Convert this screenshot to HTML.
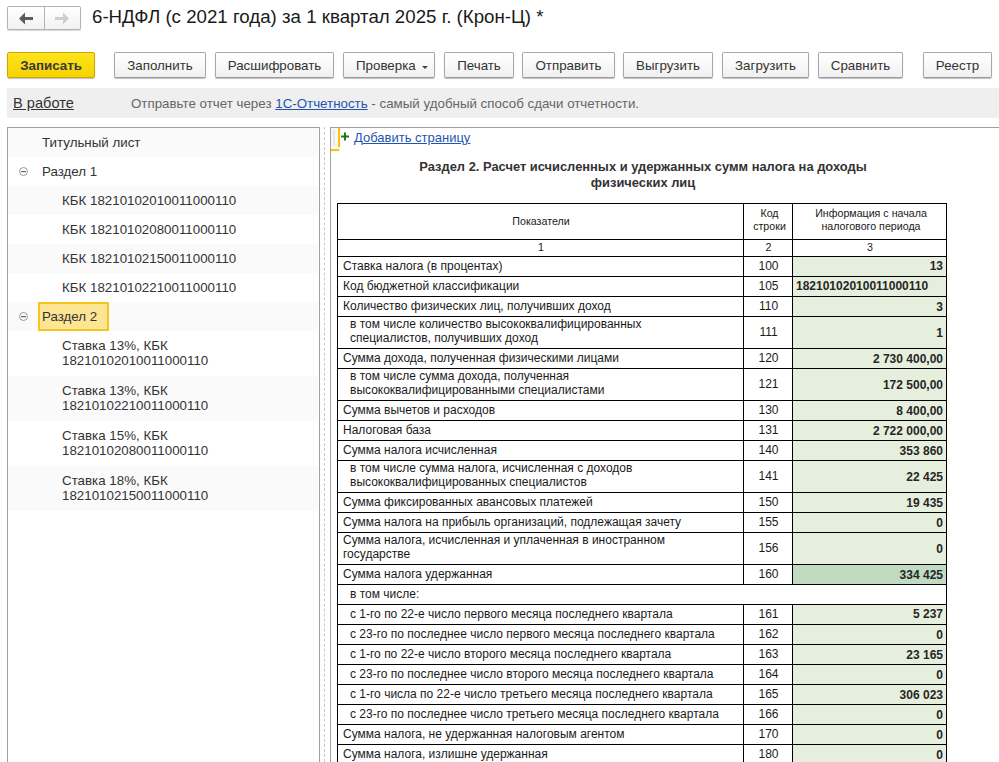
<!DOCTYPE html>
<html><head><meta charset="utf-8">
<style>
*{box-sizing:border-box;margin:0;padding:0}
html,body{width:999px;height:762px;overflow:hidden;background:#fff;font-family:"Liberation Sans",sans-serif;color:#333}
.abs{position:absolute}
.navgrp{left:7px;top:6px;width:74px;height:24px;border:1px solid #b3b3b3;border-radius:2px;background:linear-gradient(#fff,#f2f2f2);box-shadow:0 1px 1px rgba(0,0,0,.15)}
.navdiv{left:36px;top:0;width:1px;height:22px;background:#b3b3b3}
.title{left:92px;top:5px;font-size:18.7px;color:#1a1a1a;white-space:nowrap;line-height:24px}
.btn{position:absolute;top:52px;height:26px;border:1px solid #a8a8a8;border-bottom-color:#999;border-radius:2px;background:linear-gradient(#fff 0%,#fafafa 40%,#f0f0f0 100%);box-shadow:0 1px 1px rgba(0,0,0,.25);font-size:13.33px;color:#333;text-align:center;line-height:24px;padding-top:1px;white-space:nowrap}
.btn.y{background:linear-gradient(#fde31e,#f6d300);border-color:#c9a900;font-weight:bold;color:#3a3a3a}
.info{left:7px;top:88px;width:992px;height:30px;background:#efefef}
.panelL{left:7px;top:127px;width:313px;height:640px;border:1px solid #a0a0a0;border-bottom:none}
.row{position:absolute;left:0;width:310px;font-size:13.33px;color:#333;line-height:15px}
.row.g{background:#fafafa}
.splitter{left:324px;top:127px;width:1px;height:640px;border-left:1px dashed #c8c8c8}
.panelR{left:330px;top:127px;width:680px;height:640px;border:1px solid #a0a0a0;border-bottom:none;border-right:none}
table.t{position:absolute;left:337px;top:203px;border-collapse:collapse;table-layout:fixed;font-size:12px;color:#222}
table.t td{border:1px solid #000;padding:0;vertical-align:middle;line-height:14px;overflow:hidden;white-space:nowrap}

:root{--g:#e6efdd;--d:#c0dbc0}
#tbl i{position:absolute;display:block;background:#000}
#tbl b.tx{position:absolute;display:block;font-weight:normal;font-size:12px;line-height:14px;white-space:nowrap;color:#1a1a1a}
#tbl b.h{font-size:10.67px;line-height:12px}
#tbl b.v{font-weight:bold;color:#262626}
</style></head><body>
<div class="abs navgrp">
  <div class="abs navdiv"></div>
  <svg class="abs" style="left:0;top:0" width="74" height="24" viewBox="0 0 74 24">
    <path d="M11 11.5 L17 5.5 L17 10 L25 10 L25 13 L17 13 L17 17.5 Z" fill="#5c5a5e"/>
    <path d="M61 11.5 L55 5.5 L55 10 L47 10 L47 13 L55 13 L55 17.5 Z" fill="#cdcdcd"/>
  </svg>
</div>
<div class="abs title">6-НДФЛ (с 2021 года) за 1 квартал 2025 г. (Крон-Ц) *</div>

<div class="btn y" style="left:7px;width:88px">Записать</div>
<div class="btn" style="left:114px;width:92px">Заполнить</div>
<div class="btn" style="left:215px;width:119px">Расшифровать</div>
<div class="btn" style="left:343px;width:92px;text-align:left;padding-left:12px">Проверка<svg style="position:absolute;left:78px;top:13px" width="7" height="4"><path d="M0 0h6L3 3z" fill="#444"/></svg></div>
<div class="btn" style="left:444px;width:70px">Печать</div>
<div class="btn" style="left:522px;width:93px">Отправить</div>
<div class="btn" style="left:623px;width:90px">Выгрузить</div>
<div class="btn" style="left:722px;width:87px">Загрузить</div>
<div class="btn" style="left:818px;width:85px">Сравнить</div>
<div class="btn" style="left:923px;width:69px">Реестр</div>

<div class="abs info"></div>
<div class="abs" style="left:13px;top:95px;font-size:14.6px;color:#333;text-decoration:underline;line-height:17px">В работе</div>
<div class="abs" style="left:131px;top:96px;font-size:13.33px;color:#666;line-height:16px;white-space:nowrap">Отправьте отчет через <span style="color:#1f55b0;text-decoration:underline">1С-Отчетность</span> - самый удобный способ сдачи отчетности.</div>

<div class="abs panelL">
  <div class="row g" style="top:0;height:29px"><span class="abs" style="left:34px;top:7px">Титульный лист</span></div>
  <div class="row" style="top:29px;height:29px"><svg class="abs" style="left:11px;top:10px" width="10" height="10"><circle cx="4.5" cy="4.5" r="4" fill="none" stroke="#999" stroke-width="1"/><rect x="2" y="4" width="5" height="1.2" fill="#666"/></svg><span class="abs" style="left:34px;top:7px">Раздел 1</span></div>
  <div class="row g" style="top:58px;height:29px"><span class="abs" style="left:54px;top:7px">КБК 18210102010011000110</span></div>
  <div class="row" style="top:87px;height:29px"><span class="abs" style="left:54px;top:7px">КБК 18210102080011000110</span></div>
  <div class="row g" style="top:116px;height:29px"><span class="abs" style="left:54px;top:7px">КБК 18210102150011000110</span></div>
  <div class="row" style="top:145px;height:29px"><span class="abs" style="left:54px;top:7px">КБК 18210102210011000110</span></div>
  <div class="row g" style="top:174px;height:29px"><svg class="abs" style="left:11px;top:10px" width="10" height="10"><circle cx="4.5" cy="4.5" r="4" fill="none" stroke="#999" stroke-width="1"/><rect x="2" y="4" width="5" height="1.2" fill="#666"/></svg><div class="abs" style="left:30px;top:0;width:71px;height:29px;background:#fde594;border:2px solid #f6c51c"></div><span class="abs" style="left:34px;top:7px">Раздел 2</span></div>
  <div class="row" style="top:203px;height:45px"><span class="abs" style="left:54px;top:7px">Ставка 13%, КБК<br>18210102010011000110</span></div>
  <div class="row g" style="top:248px;height:45px"><span class="abs" style="left:54px;top:7px">Ставка 13%, КБК<br>18210102210011000110</span></div>
  <div class="row" style="top:293px;height:45px"><span class="abs" style="left:54px;top:7px">Ставка 15%, КБК<br>18210102080011000110</span></div>
  <div class="row g" style="top:338px;height:45px"><span class="abs" style="left:54px;top:7px">Ставка 18%, КБК<br>18210102150011000110</span></div>
</div>
<div class="abs splitter"></div>
<div class="abs panelR"></div>

<div class="abs" style="left:331px;top:128px;width:10px;height:24px;background:#f7f7f7"></div>
<div class="abs" style="left:333px;top:130px;width:2px;height:16px;background:#e8e8e8"></div>
<div class="abs" style="left:338px;top:128px;width:2px;height:19px;background:#f8c300"></div>
<div class="abs" style="left:331px;top:149px;width:8px;height:2px;background:#f8c300"></div>
<svg class="abs" style="left:340px;top:132px" width="10" height="10"><rect x="1" y="3.5" width="8" height="2" fill="#1b7a1b"/><rect x="4" y="0.5" width="2" height="8" fill="#1b7a1b"/></svg>
<div class="abs" style="left:354px;top:130px;font-size:13px;line-height:15px;color:#1f55b0;white-space:nowrap">Д<span style="text-decoration:underline">обавить страницу</span></div>
<div class="abs" style="left:343px;top:159px;width:600px;text-align:center;font-size:12.9px;font-weight:bold;line-height:16px;color:#333;white-space:nowrap">Раздел 2. Расчет исчисленных и удержанных сумм налога на доходы<br>физических лиц</div>
<!-- TABLE -->
<div id="tbl">
<i style="left:743px;top:203px;width:1px;height:37px"></i>
<i style="left:792px;top:203px;width:1px;height:37px"></i>
<b class="tx h" style="left:338px;top:215px;width:406px;text-align:center">Показатели</b>
<b class="tx h" style="left:745px;top:207px;width:49px;text-align:center;line-height:13px">Код<br>строки</b>
<b class="tx h" style="left:794px;top:207px;width:154px;text-align:center;line-height:13px">Информация с начала<br>налогового периода</b>
<i style="left:337px;top:239px;width:610px;height:1px"></i>
<i style="left:743px;top:239px;width:1px;height:18px"></i>
<i style="left:792px;top:239px;width:1px;height:18px"></i>
<b class="tx h" style="left:338px;top:241px;width:406px;text-align:center">1</b>
<b class="tx h" style="left:744px;top:241px;width:49px;text-align:center">2</b>
<b class="tx h" style="left:793px;top:241px;width:154px;text-align:center">3</b>
<i style="left:337px;top:256px;width:610px;height:1px"></i>
<i style="left:793px;top:257px;width:153px;height:19px;background:var(--g)"></i>
<i style="left:743px;top:256px;width:1px;height:21px"></i>
<i style="left:792px;top:256px;width:1px;height:21px"></i>
<b class="tx " style="left:343px;top:259px;">Ставка налога (в процентах)</b>
<b class="tx" style="left:744px;top:259px;width:49px;text-align:center">100</b>
<b class="tx v" style="left:792px;top:259px;width:151px;text-align:right">13</b>
<i style="left:337px;top:276px;width:610px;height:1px"></i>
<i style="left:793px;top:277px;width:153px;height:19px;background:var(--g)"></i>
<i style="left:743px;top:276px;width:1px;height:21px"></i>
<i style="left:792px;top:276px;width:1px;height:21px"></i>
<b class="tx " style="left:343px;top:279px;">Код бюджетной классификации</b>
<b class="tx" style="left:744px;top:279px;width:49px;text-align:center">105</b>
<b class="tx v" style="left:796px;top:279px">18210102010011000110</b>
<i style="left:337px;top:296px;width:610px;height:1px"></i>
<i style="left:793px;top:297px;width:153px;height:19px;background:var(--g)"></i>
<i style="left:743px;top:296px;width:1px;height:21px"></i>
<i style="left:792px;top:296px;width:1px;height:21px"></i>
<b class="tx " style="left:343px;top:299px;">Количество физических лиц, получивших доход</b>
<b class="tx" style="left:744px;top:299px;width:49px;text-align:center">110</b>
<b class="tx v" style="left:792px;top:300px;width:151px;text-align:right">3</b>
<i style="left:337px;top:316px;width:610px;height:1px"></i>
<i style="left:793px;top:317px;width:153px;height:31px;background:var(--g)"></i>
<i style="left:743px;top:316px;width:1px;height:33px"></i>
<i style="left:792px;top:316px;width:1px;height:33px"></i>
<b class="tx " style="left:350px;top:317px;">в том числе количество высококвалифицированных<br>специалистов, получивших доход</b>
<b class="tx" style="left:744px;top:325px;width:49px;text-align:center">111</b>
<b class="tx v" style="left:792px;top:326px;width:151px;text-align:right">1</b>
<i style="left:337px;top:348px;width:610px;height:1px"></i>
<i style="left:793px;top:349px;width:153px;height:19px;background:var(--g)"></i>
<i style="left:743px;top:348px;width:1px;height:21px"></i>
<i style="left:792px;top:348px;width:1px;height:21px"></i>
<b class="tx " style="left:343px;top:351px;">Сумма дохода, полученная физическими лицами</b>
<b class="tx" style="left:744px;top:351px;width:49px;text-align:center">120</b>
<b class="tx v" style="left:792px;top:352px;width:151px;text-align:right">2 730 400,00</b>
<i style="left:337px;top:368px;width:610px;height:1px"></i>
<i style="left:793px;top:369px;width:153px;height:31px;background:var(--g)"></i>
<i style="left:743px;top:368px;width:1px;height:33px"></i>
<i style="left:792px;top:368px;width:1px;height:33px"></i>
<b class="tx " style="left:350px;top:369px;">в том числе сумма дохода, полученная<br>высококвалифицированными специалистами</b>
<b class="tx" style="left:744px;top:377px;width:49px;text-align:center">121</b>
<b class="tx v" style="left:792px;top:378px;width:151px;text-align:right">172 500,00</b>
<i style="left:337px;top:400px;width:610px;height:1px"></i>
<i style="left:793px;top:401px;width:153px;height:19px;background:var(--g)"></i>
<i style="left:743px;top:400px;width:1px;height:21px"></i>
<i style="left:792px;top:400px;width:1px;height:21px"></i>
<b class="tx " style="left:343px;top:403px;">Сумма вычетов и расходов</b>
<b class="tx" style="left:744px;top:403px;width:49px;text-align:center">130</b>
<b class="tx v" style="left:792px;top:404px;width:151px;text-align:right">8 400,00</b>
<i style="left:337px;top:420px;width:610px;height:1px"></i>
<i style="left:793px;top:421px;width:153px;height:19px;background:var(--g)"></i>
<i style="left:743px;top:420px;width:1px;height:21px"></i>
<i style="left:792px;top:420px;width:1px;height:21px"></i>
<b class="tx " style="left:343px;top:423px;">Налоговая база</b>
<b class="tx" style="left:744px;top:423px;width:49px;text-align:center">131</b>
<b class="tx v" style="left:792px;top:424px;width:151px;text-align:right">2 722 000,00</b>
<i style="left:337px;top:440px;width:610px;height:1px"></i>
<i style="left:793px;top:441px;width:153px;height:19px;background:var(--g)"></i>
<i style="left:743px;top:440px;width:1px;height:21px"></i>
<i style="left:792px;top:440px;width:1px;height:21px"></i>
<b class="tx " style="left:343px;top:443px;">Сумма налога исчисленная</b>
<b class="tx" style="left:744px;top:443px;width:49px;text-align:center">140</b>
<b class="tx v" style="left:792px;top:444px;width:151px;text-align:right">353 860</b>
<i style="left:337px;top:460px;width:610px;height:1px"></i>
<i style="left:793px;top:461px;width:153px;height:31px;background:var(--g)"></i>
<i style="left:743px;top:460px;width:1px;height:33px"></i>
<i style="left:792px;top:460px;width:1px;height:33px"></i>
<b class="tx " style="left:350px;top:461px;">в том числе сумма налога, исчисленная с доходов<br>высококвалифицированных специалистов</b>
<b class="tx" style="left:744px;top:469px;width:49px;text-align:center">141</b>
<b class="tx v" style="left:792px;top:470px;width:151px;text-align:right">22 425</b>
<i style="left:337px;top:492px;width:610px;height:1px"></i>
<i style="left:793px;top:493px;width:153px;height:19px;background:var(--g)"></i>
<i style="left:743px;top:492px;width:1px;height:21px"></i>
<i style="left:792px;top:492px;width:1px;height:21px"></i>
<b class="tx " style="left:343px;top:495px;">Сумма фиксированных авансовых платежей</b>
<b class="tx" style="left:744px;top:495px;width:49px;text-align:center">150</b>
<b class="tx v" style="left:792px;top:496px;width:151px;text-align:right">19 435</b>
<i style="left:337px;top:512px;width:610px;height:1px"></i>
<i style="left:793px;top:513px;width:153px;height:19px;background:var(--g)"></i>
<i style="left:743px;top:512px;width:1px;height:21px"></i>
<i style="left:792px;top:512px;width:1px;height:21px"></i>
<b class="tx " style="left:343px;top:515px;">Сумма налога на прибыль организаций, подлежащая зачету</b>
<b class="tx" style="left:744px;top:515px;width:49px;text-align:center">155</b>
<b class="tx v" style="left:792px;top:516px;width:151px;text-align:right">0</b>
<i style="left:337px;top:532px;width:610px;height:1px"></i>
<i style="left:793px;top:533px;width:153px;height:31px;background:var(--g)"></i>
<i style="left:743px;top:532px;width:1px;height:33px"></i>
<i style="left:792px;top:532px;width:1px;height:33px"></i>
<b class="tx " style="left:343px;top:533px;">Сумма налога, исчисленная и уплаченная в иностранном<br>государстве</b>
<b class="tx" style="left:744px;top:541px;width:49px;text-align:center">156</b>
<b class="tx v" style="left:792px;top:542px;width:151px;text-align:right">0</b>
<i style="left:337px;top:564px;width:610px;height:1px"></i>
<i style="left:793px;top:565px;width:153px;height:19px;background:var(--d)"></i>
<i style="left:743px;top:564px;width:1px;height:21px"></i>
<i style="left:792px;top:564px;width:1px;height:21px"></i>
<b class="tx " style="left:343px;top:567px;">Сумма налога удержанная</b>
<b class="tx" style="left:744px;top:567px;width:49px;text-align:center">160</b>
<b class="tx v" style="left:792px;top:568px;width:151px;text-align:right">334 425</b>
<i style="left:337px;top:584px;width:610px;height:1px"></i>
<b class="tx " style="left:350px;top:587px;">в том числе:</b>
<i style="left:337px;top:604px;width:610px;height:1px"></i>
<i style="left:793px;top:605px;width:153px;height:19px;background:var(--g)"></i>
<i style="left:743px;top:604px;width:1px;height:21px"></i>
<i style="left:792px;top:604px;width:1px;height:21px"></i>
<b class="tx " style="left:350px;top:607px;">с 1-го по 22-е число первого месяца последнего квартала</b>
<b class="tx" style="left:744px;top:607px;width:49px;text-align:center">161</b>
<b class="tx v" style="left:792px;top:607px;width:151px;text-align:right">5 237</b>
<i style="left:337px;top:624px;width:610px;height:1px"></i>
<i style="left:793px;top:625px;width:153px;height:19px;background:var(--g)"></i>
<i style="left:743px;top:624px;width:1px;height:21px"></i>
<i style="left:792px;top:624px;width:1px;height:21px"></i>
<b class="tx " style="left:350px;top:627px;">с 23-го по последнее число первого месяца последнего квартала</b>
<b class="tx" style="left:744px;top:627px;width:49px;text-align:center">162</b>
<b class="tx v" style="left:792px;top:628px;width:151px;text-align:right">0</b>
<i style="left:337px;top:644px;width:610px;height:1px"></i>
<i style="left:793px;top:645px;width:153px;height:19px;background:var(--g)"></i>
<i style="left:743px;top:644px;width:1px;height:21px"></i>
<i style="left:792px;top:644px;width:1px;height:21px"></i>
<b class="tx " style="left:350px;top:647px;">с 1-го по 22-е число второго месяца последнего квартала</b>
<b class="tx" style="left:744px;top:647px;width:49px;text-align:center">163</b>
<b class="tx v" style="left:792px;top:648px;width:151px;text-align:right">23 165</b>
<i style="left:337px;top:664px;width:610px;height:1px"></i>
<i style="left:793px;top:665px;width:153px;height:19px;background:var(--g)"></i>
<i style="left:743px;top:664px;width:1px;height:21px"></i>
<i style="left:792px;top:664px;width:1px;height:21px"></i>
<b class="tx " style="left:350px;top:667px;">с 23-го по последнее число второго месяца последнего квартала</b>
<b class="tx" style="left:744px;top:667px;width:49px;text-align:center">164</b>
<b class="tx v" style="left:792px;top:668px;width:151px;text-align:right">0</b>
<i style="left:337px;top:684px;width:610px;height:1px"></i>
<i style="left:793px;top:685px;width:153px;height:19px;background:var(--g)"></i>
<i style="left:743px;top:684px;width:1px;height:21px"></i>
<i style="left:792px;top:684px;width:1px;height:21px"></i>
<b class="tx " style="left:350px;top:687px;">с 1-го числа по 22-е число третьего месяца последнего квартала</b>
<b class="tx" style="left:744px;top:687px;width:49px;text-align:center">165</b>
<b class="tx v" style="left:792px;top:688px;width:151px;text-align:right">306 023</b>
<i style="left:337px;top:704px;width:610px;height:1px"></i>
<i style="left:793px;top:705px;width:153px;height:19px;background:var(--g)"></i>
<i style="left:743px;top:704px;width:1px;height:21px"></i>
<i style="left:792px;top:704px;width:1px;height:21px"></i>
<b class="tx " style="left:350px;top:707px;">с 23-го по последнее число третьего месяца последнего квартала</b>
<b class="tx" style="left:744px;top:707px;width:49px;text-align:center">166</b>
<b class="tx v" style="left:792px;top:708px;width:151px;text-align:right">0</b>
<i style="left:337px;top:724px;width:610px;height:1px"></i>
<i style="left:793px;top:725px;width:153px;height:19px;background:var(--g)"></i>
<i style="left:743px;top:724px;width:1px;height:21px"></i>
<i style="left:792px;top:724px;width:1px;height:21px"></i>
<b class="tx " style="left:343px;top:727px;">Сумма налога, не удержанная налоговым агентом</b>
<b class="tx" style="left:744px;top:727px;width:49px;text-align:center">170</b>
<b class="tx v" style="left:792px;top:728px;width:151px;text-align:right">0</b>
<i style="left:337px;top:744px;width:610px;height:1px"></i>
<i style="left:793px;top:745px;width:153px;height:19px;background:var(--g)"></i>
<i style="left:743px;top:744px;width:1px;height:21px"></i>
<i style="left:792px;top:744px;width:1px;height:21px"></i>
<b class="tx " style="left:343px;top:747px;">Сумма налога, излишне удержанная</b>
<b class="tx" style="left:744px;top:747px;width:49px;text-align:center">180</b>
<b class="tx v" style="left:792px;top:748px;width:151px;text-align:right">0</b>
<i style="left:337px;top:764px;width:610px;height:1px"></i>
<i style="left:337px;top:203px;width:610px;height:1px"></i>
<i style="left:337px;top:203px;width:1px;height:562px"></i>
<i style="left:946px;top:203px;width:1px;height:562px"></i>

</div>
</body></html>
